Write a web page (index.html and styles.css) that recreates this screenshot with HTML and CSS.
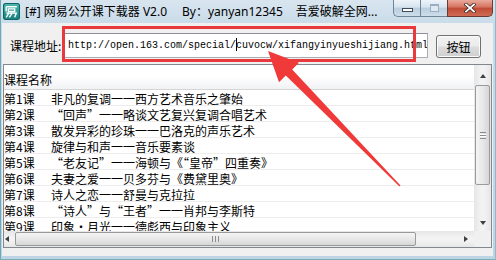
FILE: index.html
```html
<!DOCTYPE html>
<html lang="zh-CN">
<head>
<meta charset="utf-8">
<title>网易公开课下载器</title>
<link rel="stylesheet" href="styles.css">
</head>
<body>
<div class="window">
  <div class="titlebar">
    <svg class="app-icon" viewBox="0 0 16 16" width="17" height="17">
      <defs>
        <linearGradient id="ig" x1="0" y1="0" x2="0" y2="1">
          <stop offset="0" stop-color="#4fb8b0"/>
          <stop offset="1" stop-color="#17827f"/>
        </linearGradient>
      </defs>
      <rect x="0.5" y="0.5" width="15" height="15" rx="2" fill="url(#ig)" stroke="#0f6462" stroke-width="1"/>
      <path d="M3 3.5h10M3 3.5v4.5M5 5.5h6v2.5H5zM3 9.5h9.5l-1.5 4M5.5 9.5l-2.5 4M8.5 9.5l-2.5 4" fill="none" stroke="#fff" stroke-width="1.3"/>
    </svg>
    <span class="title">[#] 网易公开课下载器 V2.0</span>
    <span class="title by">By：yanyan12345</span>
    <span class="title site">吾爱破解全网...</span>
    <div class="caption-buttons">
      <div class="cap cap-min"><span class="min-glyph"></span></div>
      <div class="cap cap-max"><span class="max-glyph"></span></div>
      <div class="cap cap-close">
        <svg viewBox="0 0 12 10" width="12" height="10">
          <path d="M2 1.5l8 7M10 1.5l-8 7" stroke="#3b2424" stroke-width="3.4" stroke-linecap="square"/>
          <path d="M2 1.5l8 7M10 1.5l-8 7" stroke="#fff" stroke-width="1.8" stroke-linecap="square"/>
        </svg>
      </div>
    </div>
  </div>

  <div class="client">
    <div class="addr-row">
      <span class="addr-label">课程地址:</span>
      <div class="url-box">http://open.163.com/special/<span class="caret"></span>cuvocw/xifangyinyueshijiang.html</div>
      <div class="btn">按钮</div>
    </div>

    <div class="listview">
      <div class="list-content">
        <div class="list-header"><span class="col1">课程名称</span></div>
        <div class="row"><span class="col1">第1课</span><span class="col2">非凡的复调一一西方艺术音乐之肇始</span></div>
        <div class="row"><span class="col1">第2课</span><span class="col2">“回声”一一略谈文艺复兴复调合唱艺术</span></div>
        <div class="row"><span class="col1">第3课</span><span class="col2">散发异彩的珍珠一一巴洛克的声乐艺术</span></div>
        <div class="row"><span class="col1">第4课</span><span class="col2">旋律与和声一一音乐要素谈</span></div>
        <div class="row"><span class="col1">第5课</span><span class="col2">“老友记”一一海顿与《“皇帝”四重奏》</span></div>
        <div class="row"><span class="col1">第6课</span><span class="col2">夫妻之爱一一贝多芬与《费黛里奥》</span></div>
        <div class="row"><span class="col1">第7课</span><span class="col2">诗人之恋一一舒曼与克拉拉</span></div>
        <div class="row"><span class="col1">第8课</span><span class="col2">“诗人”与“王者”一一肖邦与李斯特</span></div>
        <div class="row"><span class="col1">第9课</span><span class="col2">印象·月光一一德彪西与印象主义</span></div>
      </div>
      <div class="vscroll">
        <div class="sb-btn"><span class="arr arr-up"></span></div>
        <div class="vthumb"><span class="vgrip"></span></div>
        <div class="sb-fill"></div>
        <div class="sb-btn"><span class="arr arr-down"></span></div>
      </div>
      <div class="hscroll">
        <div class="sb-hbtn sb-left"><span class="arr arr-left"></span></div>
        <div class="hthumb"><span class="hgrip"></span></div>
        <div class="sb-fill"></div>
        <div class="sb-hbtn"><span class="arr arr-right"></span></div>
      </div>
      <div class="corner"></div>
    </div>
  </div>

  <svg class="annot" viewBox="0 0 496 260" width="496" height="260">
    <rect x="63.5" y="27.5" width="351" height="33" fill="none" stroke="#e8393c" stroke-width="3"/>
    <polygon fill="#f03a3a" points="268,51 299,62.7 292.2,69.4 400.5,185.5 399.5,186.5 285.8,75.6 279,82.3"/>
  </svg>
</div>
</body>
</html>
```

FILE: styles.css
```css
html, body {
  margin: 0;
  padding: 0;
}

body {
  width: 496px;
  height: 260px;
  overflow: hidden;
  font-family: "Noto Sans CJK SC", "Noto Sans", sans-serif;
  font-size: 12px;
  color: #000;
}

.window {
  position: relative;
  width: 496px;
  height: 260px;
  box-sizing: border-box;
  background: linear-gradient(#d8e5ef, #c9dbe9 24px, #bdd4e5);
  border-left: 1px solid #6fa9b6;
  border-right: 1px solid #8dbac6;
  border-bottom: 1px solid #79aebb;
  display: flex;
  flex-direction: column;
}

/* title bar */
.titlebar {
  height: 23px;
  display: flex;
  align-items: flex-start;
}

.app-icon {
  margin: 3px 0 0 2px;
  flex: none;
}

.title {
  font-family: "Noto Sans", "Noto Sans CJK SC", sans-serif;
  font-size: 12px;
  line-height: 24px;
  white-space: nowrap;
  margin-left: 5px;
}

.title.by {
  margin-left: 15px;
}

.title.site {
  margin-left: 13px;
}

.caption-buttons {
  margin-left: auto;
  margin-right: 2px;
  display: flex;
  height: 17px;
}

.cap {
  box-sizing: border-box;
  height: 17px;
  display: flex;
  align-items: center;
  justify-content: center;
  border: 1px solid #6f8497;
  border-top-width: 0;
}

.cap-min {
  width: 27px;
  border-radius: 0 0 0 5px;
  border-right-width: 0;
  background: linear-gradient(#eef4f9, #d6e3ee 45%, #b9cee0 50%, #cddde9);
}

.cap-max {
  width: 27px;
  border-right-width: 0;
  background: linear-gradient(#eef4f9, #d6e3ee 45%, #b9cee0 50%, #cddde9);
}

.cap-close {
  width: 46px;
  border-radius: 0 0 5px 0;
  border-color: #6b3a33;
  background: linear-gradient(#e9a99b, #d47260 45%, #c04a34 50%, #cf6b55);
}

.min-glyph {
  width: 9px;
  height: 2px;
  margin-top: 4px;
  background: #fff;
  border: 1px solid #3f4d5a;
}

.max-glyph {
  width: 7px;
  height: 5px;
  border: 1px solid #98aec1;
  border-top-width: 2px;
  background: #dfe9f1;
}

/* client */
.client {
  margin: 0 2px 0 1px;
  height: 233px;
  background: #f0f0f0;
  display: flex;
  flex-direction: column;
}

.addr-row {
  height: 41px;
  box-sizing: border-box;
  display: flex;
  align-items: flex-start;
  padding: 10px 0 0 8px;
}

.addr-label {
  width: 54px;
  line-height: 14px;
  margin-top: 6px;
  font-size: 12px;
  white-space: nowrap;
}

.url-box {
  width: 364px;
  height: 25px;
  box-sizing: border-box;
  border: 1px solid #abadb3;
  border-top-color: #8e9199;
  background: #fff;
  padding-left: 3px;
  overflow: hidden;
  white-space: nowrap;
  font-family: "Liberation Mono", monospace;
  font-size: 10px;
  line-height: 24px;
  color: #000;
}

.caret {
  display: inline-block;
  width: 0;
  height: 13px;
  border-left: 1px solid #000;
  vertical-align: -3px;
  margin-right: -1px;
}

.btn {
  margin: 2px 0 0 8px;
  width: 45px;
  height: 23px;
  box-sizing: border-box;
  border: 1px solid #707070;
  border-radius: 3px;
  background: linear-gradient(#f2f2f2, #ebebeb 48%, #dddddd 52%, #cfcfcf);
  box-shadow: inset 0 0 0 1px #fbfbfb;
  display: flex;
  align-items: center;
  justify-content: center;
  font-size: 12px;
  line-height: 14px;
}

/* list view */
.listview {
  margin-left: 1px;
  width: 489px;
  height: 184px;
  box-sizing: border-box;
  border: 1px solid #828790;
  background: #fff;
  display: grid;
  grid-template-columns: 1fr 17px;
  grid-template-rows: 1fr 16px;
  overflow: hidden;
}

.list-content {
  overflow: hidden;
  min-height: 0;
}

.list-header {
  height: 25px;
  box-sizing: border-box;
  border-bottom: 1px solid #d5d5d5;
  background: linear-gradient(#ffffff, #ffffff 45%, #f1f2f4);
  padding-top: 7px;
  line-height: 16px;
  white-space: nowrap;
}

.row {
  height: 16px;
  box-sizing: border-box;
  border-bottom: 1px solid #ededed;
  padding-top: 2px;
  line-height: 14px;
  white-space: nowrap;
  display: flex;
}

.col1 {
  width: 47px;
  flex: none;
  padding-left: 0;
}

.col2 {
  white-space: nowrap;
}

/* scrollbars */
.vscroll {
  grid-row: 1;
  grid-column: 2;
  display: flex;
  flex-direction: column;
  background: linear-gradient(90deg, #e6e6e6, #f2f2f2 40%, #f2f2f2 60%, #e6e6e6);
}

.sb-btn {
  height: 17px;
  flex: none;
  display: flex;
  align-items: center;
  justify-content: center;
}

.sb-fill {
  flex: 1;
}

.vthumb {
  margin: 3px 1px 0 1px;
  height: 100px;
  box-sizing: border-box;
  border: 1px solid #9a9a9a;
  border-radius: 2px;
  background: linear-gradient(90deg, #f4f4f4, #e8e8e8 50%, #d6d6d6);
  display: flex;
  align-items: center;
  justify-content: center;
}

.vgrip {
  width: 6px;
  height: 5px;
  border-top: 1px solid #8c8c8c;
  border-bottom: 1px solid #8c8c8c;
  background: linear-gradient(#fff 0 1px, #8c8c8c 1px 2px, #fff 2px 3px, transparent 3px);
  background-size: 100% 4px;
  background-position: 0 1px;
  background-repeat: no-repeat;
}

.hscroll {
  grid-row: 2;
  grid-column: 1;
  display: flex;
  background: linear-gradient(#e6e6e6, #f2f2f2 40%, #f2f2f2 60%, #e6e6e6);
}

.sb-hbtn {
  width: 17px;
  flex: none;
  display: flex;
  align-items: center;
  justify-content: center;
}

.sb-left {
  width: 11px;
  justify-content: flex-start;
  padding-left: 1px;
  box-sizing: border-box;
}

.hthumb {
  width: 401px;
  flex: none;
  margin: 1px 0;
  box-sizing: border-box;
  border: 1px solid #9a9a9a;
  border-radius: 2px;
  background: linear-gradient(#f4f4f4, #e8e8e8 50%, #d6d6d6);
  display: flex;
  align-items: center;
  justify-content: center;
}

.hgrip {
  width: 5px;
  height: 6px;
  border-left: 1px solid #8c8c8c;
  border-right: 1px solid #8c8c8c;
  background: linear-gradient(90deg, transparent 0 1px, #8c8c8c 1px 2px, transparent 2px);
  background-size: 100% 100%;
  background-position: 1px 0;
  background-repeat: no-repeat;
}

.corner {
  grid-row: 2;
  grid-column: 2;
  background: #f0f0f0;
}

.arr {
  width: 0;
  height: 0;
}

.arr-up {
  margin-top: 4px;
  border-left: 3.5px solid transparent;
  border-right: 3.5px solid transparent;
  border-bottom: 4px solid #404040;
}

.arr-down {
  border-left: 3.5px solid transparent;
  border-right: 3.5px solid transparent;
  border-top: 4px solid #404040;
}

.arr-left {
  border-top: 3.5px solid transparent;
  border-bottom: 3.5px solid transparent;
  border-right: 4px solid #404040;
}

.arr-right {
  border-top: 3.5px solid transparent;
  border-bottom: 3.5px solid transparent;
  border-left: 4px solid #404040;
}

/* annotation overlay (red box + arrow drawn over the screenshot) */
.annot {
  position: absolute;
  left: -1px;
  top: 0;
  pointer-events: none;
}
```
